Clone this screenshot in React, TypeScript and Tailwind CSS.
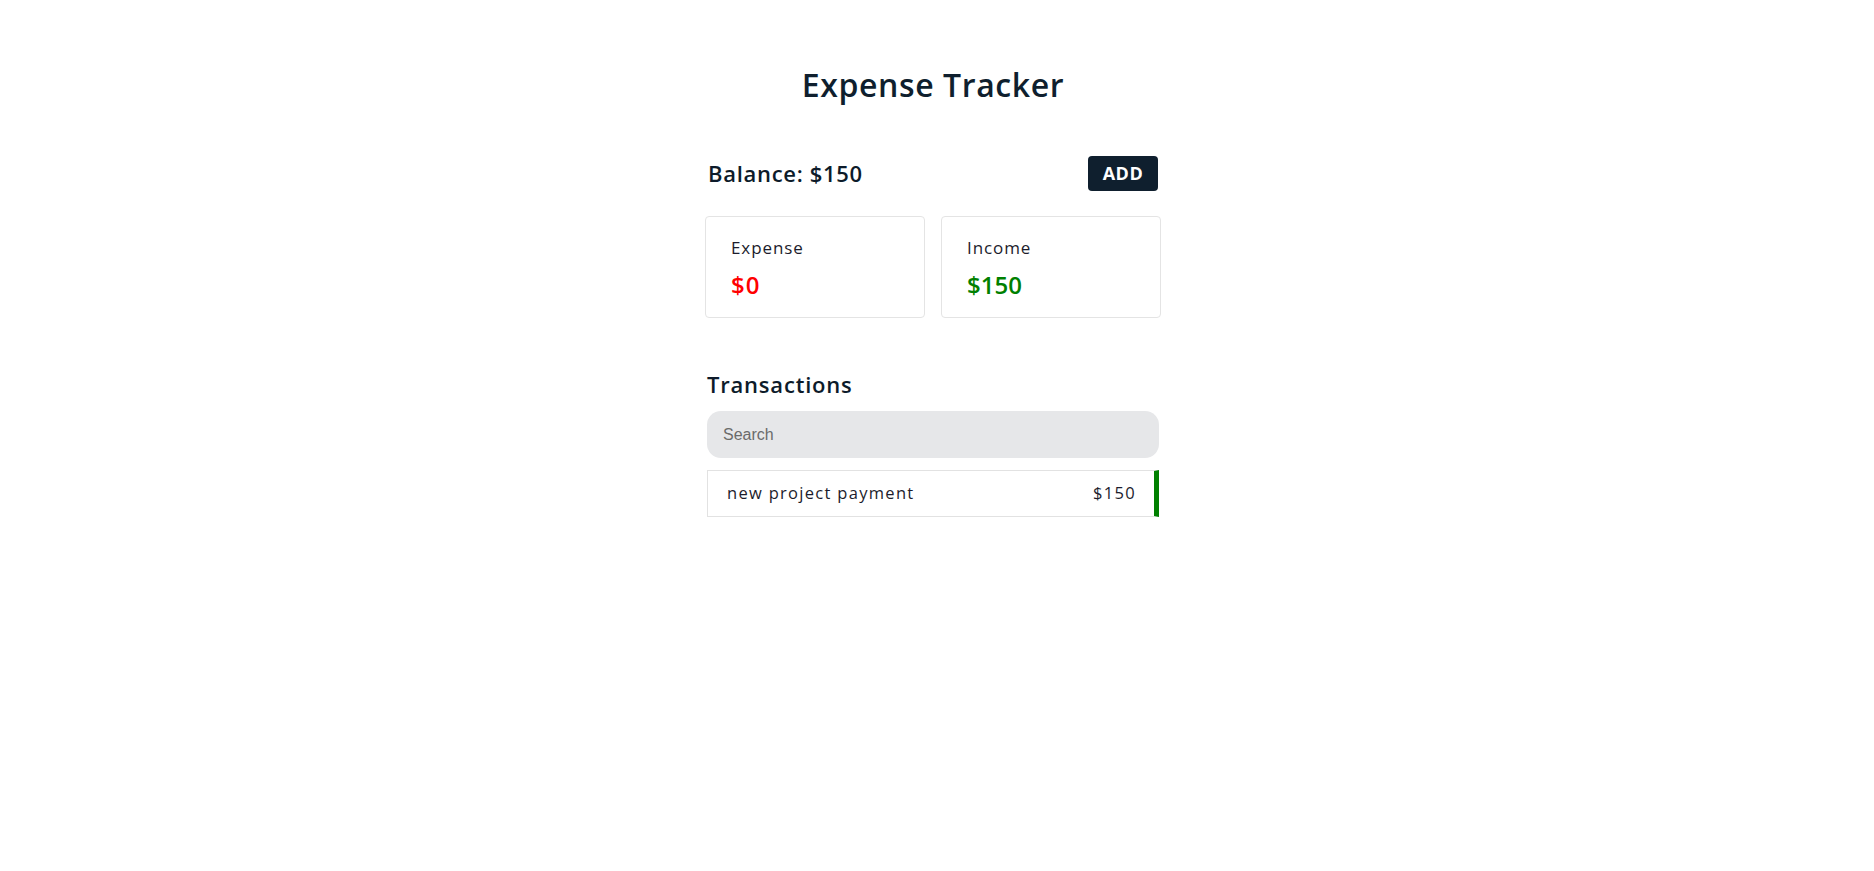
const font = { fontFamily: '"Open Sans", "Liberation Sans", sans-serif' };

export default function App() {
  return (
    <div className="min-h-screen bg-white pr-[8px] text-[#0d1b2a]" style={font}>
      <div className="mx-auto flex w-[456px] flex-col pt-[61px]">
        <h1 className="text-center text-[32px] font-semibold leading-[48px] tracking-[0.6px] text-[#0f1f2e]">
          Expense Tracker
        </h1>

        <div className="mt-[47px] flex items-center justify-between px-[3px]">
          <span className="text-[22px] font-semibold tracking-[0.7px]">Balance: $150</span>
          <button className="h-[35px] w-[70px] rounded-[4px] bg-[#0f1f2e] text-[18px] font-bold tracking-[0.5px] text-white">
            ADD
          </button>
        </div>

        <div className="mt-[25px] grid grid-cols-2 gap-[16px]">
          <div className="h-[102px] rounded-[4px] border border-[#e4e4e4] px-[25px] pt-[18px]">
            <div className="text-[17px] tracking-[0.9px] text-[#1c1c2c]">Expense</div>
            <div className="mt-[6px] text-[24px] font-semibold tracking-[1px] text-[#ff0000]">$0</div>
          </div>
          <div className="h-[102px] rounded-[4px] border border-[#e4e4e4] px-[25px] pt-[18px]">
            <div className="text-[17px] tracking-[0.9px] text-[#1c1c2c]">Income</div>
            <div className="mt-[6px] text-[24px] font-semibold text-[#008000]">$150</div>
          </div>
        </div>

        <div className="px-[2px]">
          <h2 className="mt-[50px] text-[22px] font-semibold tracking-[0.8px]">Transactions</h2>
          <input
            placeholder="Search"
            className="mt-[10px] h-[47px] w-full rounded-[14px] bg-[#e6e7e9] px-[16px] text-[16px] outline-none placeholder:text-[#6b6b6b]"
            style={{ fontFamily: '"Liberation Sans", Arial, sans-serif' }}
          />
          <div className="mt-[12px] flex h-[47px] items-center justify-between border border-r-[5px] border-[#e2e2e2] border-r-[#008000] pl-[19px] pr-[18px] text-[16.5px] tracking-[1.3px] text-[#1c1c2c]">
            <span>new project payment</span>
            <span>$150</span>
          </div>
        </div>
      </div>
    </div>
  );
}
